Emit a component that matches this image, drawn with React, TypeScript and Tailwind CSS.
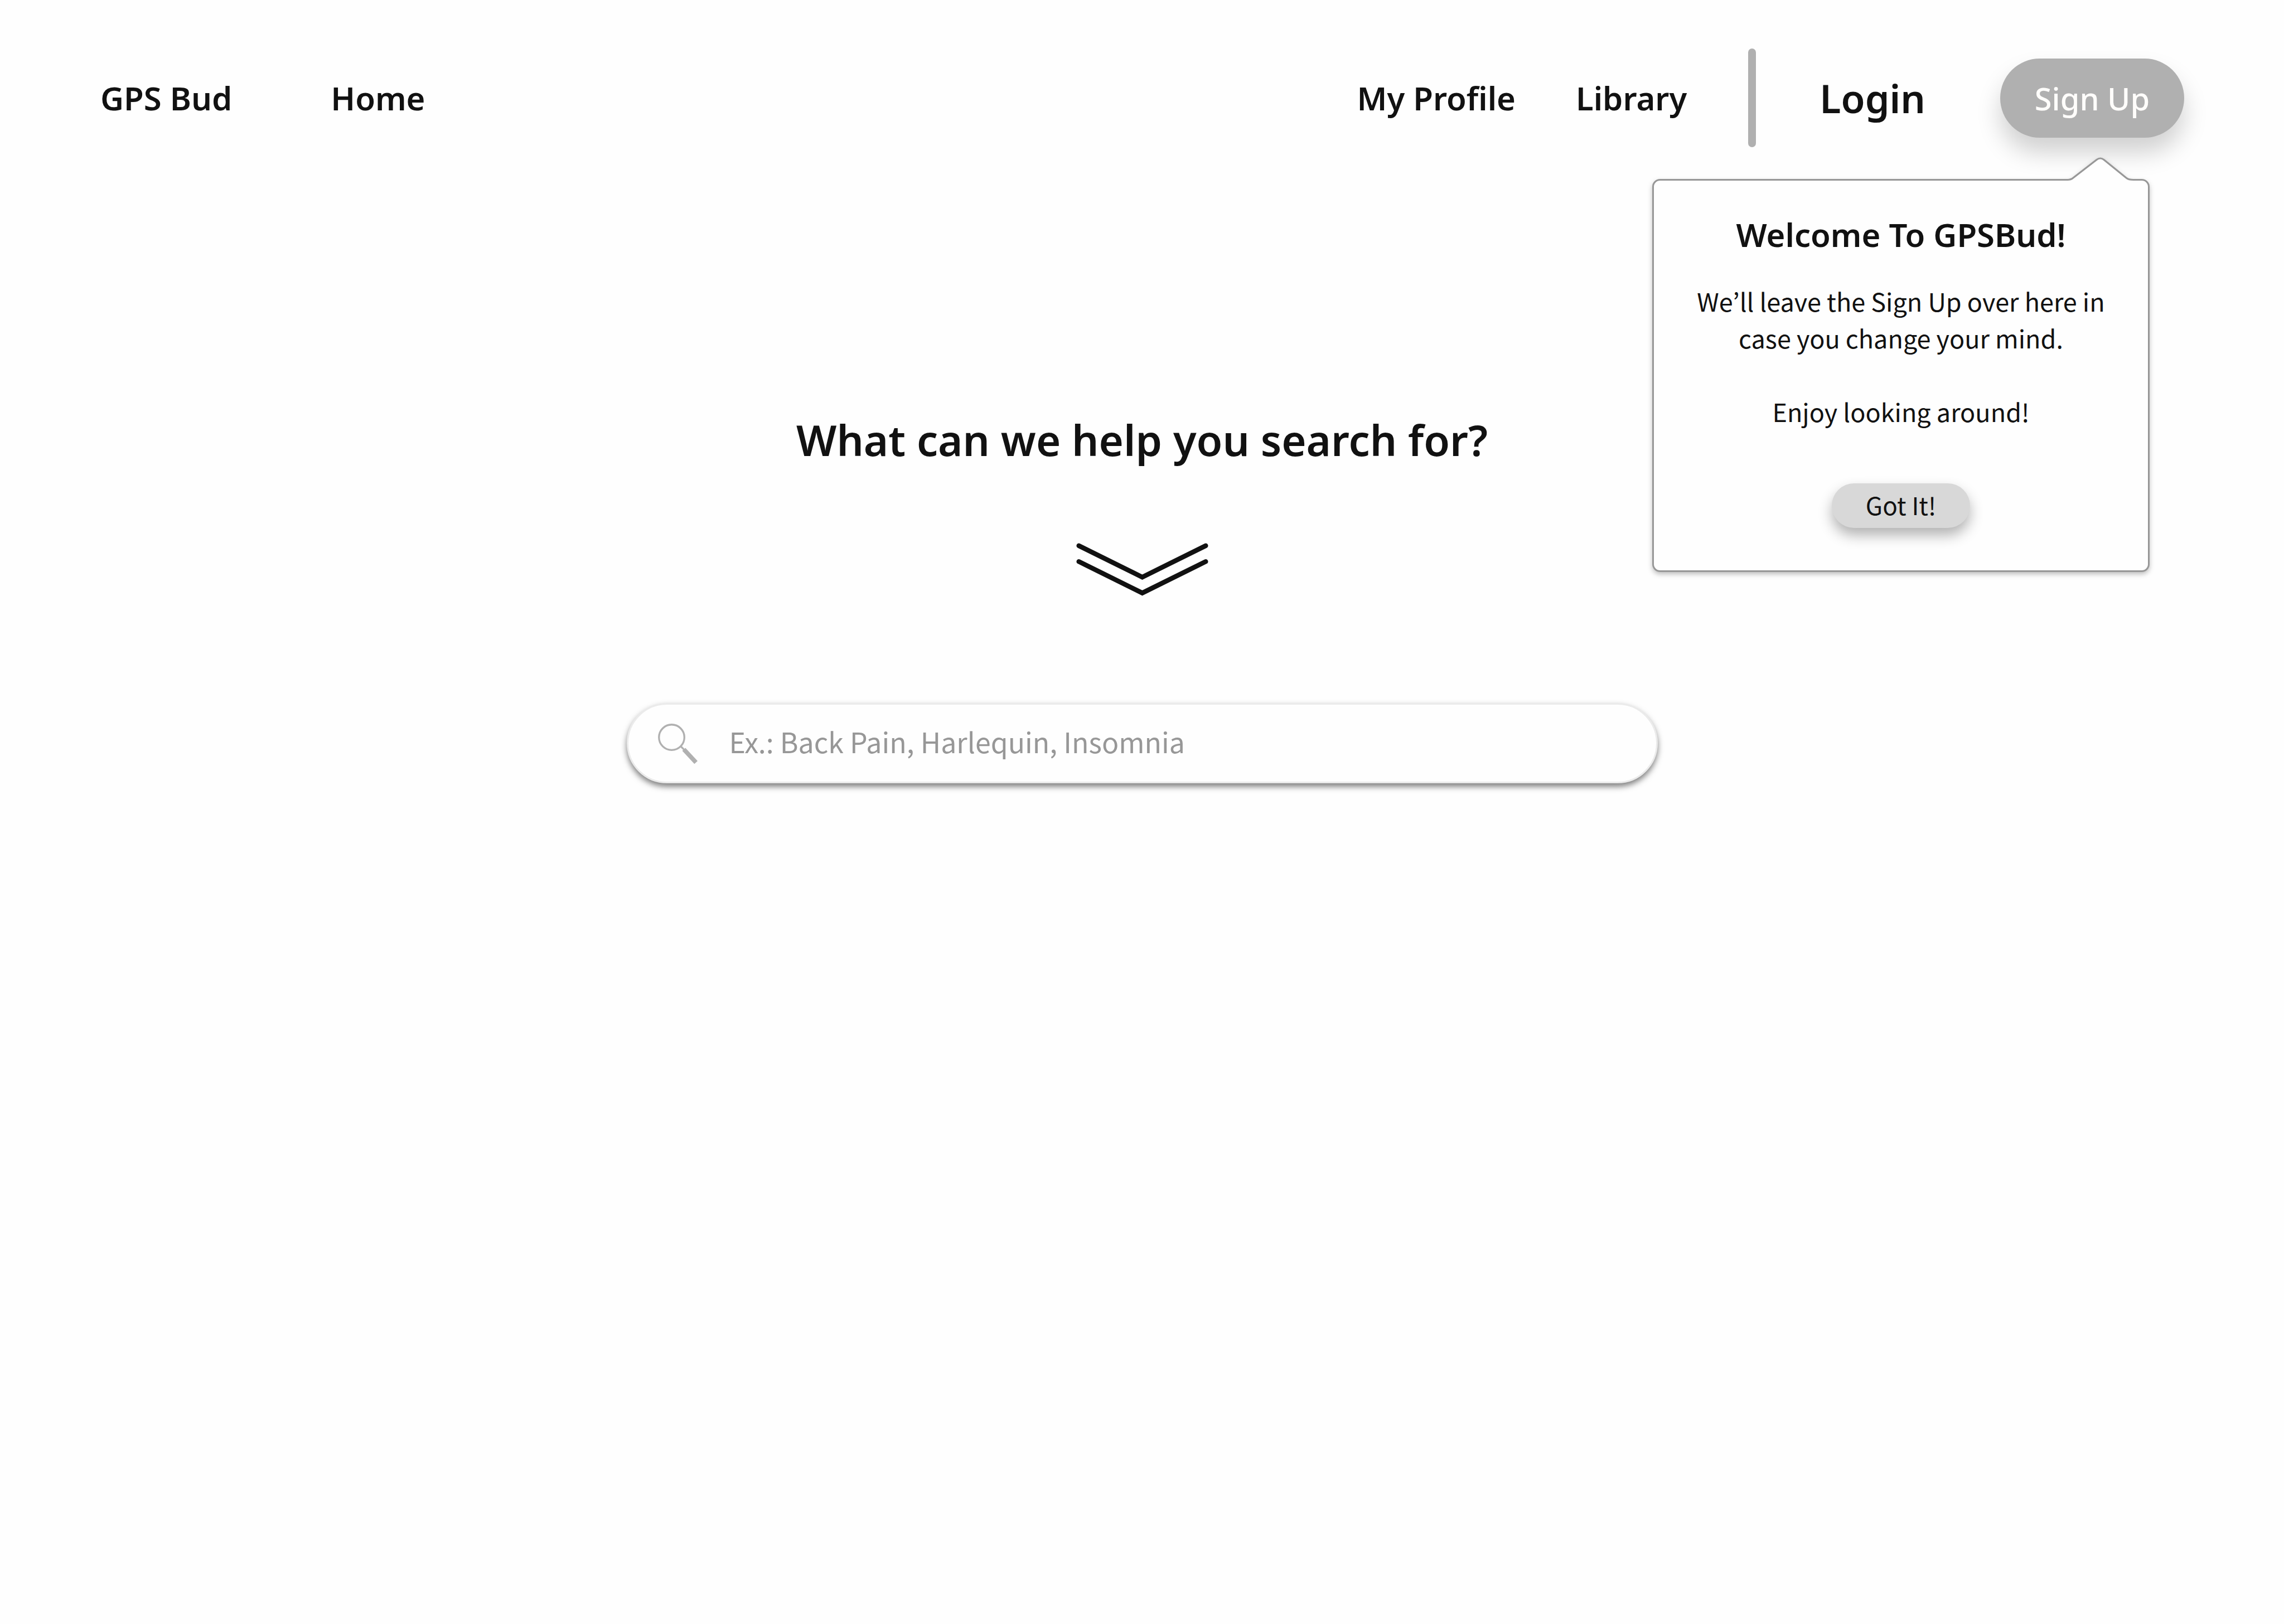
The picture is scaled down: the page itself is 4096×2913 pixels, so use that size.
const heading = "font-['Noto_Sans',sans-serif] text-[#111111]";
const body = "font-['Noto_Sans_CJK_KR',sans-serif] text-[#111111]";

function NavLink({ label }: { label: string }) {
  return (
    <a href="#" className={`${heading} text-[58px] leading-[80px] font-semibold whitespace-nowrap`}>
      {label}
    </a>
  );
}

function WelcomePopover() {
  return (
    <section
      role="dialog"
      aria-labelledby="welcome-title"
      className="absolute top-[216px] right-[62px] flex w-[892px] flex-col items-center rounded-[14px] border-[3px] border-[#979797] bg-[#fefefe] pt-[57px] pb-[76px] text-center drop-shadow-[0_4px_4px_rgba(0,0,0,0.25)]"
    >
      <svg
        aria-hidden="true"
        viewBox="0 0 120 44"
        className="absolute -top-[42px] right-[25px] h-[44px] w-[120px]"
      >
        <path
          d="M1 44V40.500C6 40.500 8 39.500 11 36.500L52 4.500Q59.500 -1 67 4.500L107 36.500C110 39.500 113 40.500 119 40.500V44Z"
          fill="#fefefe"
        />
        <path
          d="M1 40.500C6 40.500 8 39.500 11 37L53 4.500Q59.500 -0.500 66 4.500L106 37C109 39.500 112 40.500 119 40.500"
          fill="none"
          stroke="#979797"
          strokeWidth="3"
        />
      </svg>
      <h2 id="welcome-title" className={`${heading} text-[58px] leading-[80px] font-semibold`}>
        Welcome To GPSBud!
      </h2>
      <div className={`${body} mt-[46px] text-[45px] leading-[66px]`}>
        <p>
          We’ll leave the Sign Up over here in
          <br />
          case you change your mind.
        </p>
        <p className="mt-[66px]">Enjoy looking around!</p>
      </div>
      <button
        type="button"
        className={`${body} mt-24 h-20 w-[248px] rounded-full bg-[#d8d8d8] pb-1 text-[44px] leading-none shadow-[0_13px_25px_rgba(0,0,0,0.3)]`}
      >
        Got It!
      </button>
    </section>
  );
}

function SearchIcon() {
  return (
    <svg aria-hidden="true" viewBox="0 0 100 100" className="size-[95px] shrink-0" fill="none" stroke="#b0b0b0">
      <circle cx="35.300" cy="38.500" r="24" strokeWidth="3.500" />
      <path d="M52 55L59 62" strokeWidth="3.500" />
      <path d="M58.300 61.200L81.200 86" strokeWidth="8.200" />
    </svg>
  );
}

export default function App() {
  return (
    <div className="min-h-screen bg-[#fefefe]">
      <header className="flex items-center justify-between pt-[87px] pr-[179px] pl-[180px]">
        <nav aria-label="Main" className="flex items-center gap-[177px]">
          <NavLink label="GPS Bud" />
          <NavLink label="Home" />
        </nav>
        <div className="flex items-center">
          <nav aria-label="Account" className="flex items-center gap-[108px]">
            <NavLink label="My Profile" />
            <NavLink label="Library" />
          </nav>
          <div className="mr-[114px] ml-[110px] h-[177px] w-[14px] rounded-full bg-[#b0b0b0]" />
          <a href="#" className={`${heading} mr-[134px] text-[70px] leading-[96px] font-semibold`}>
            Login
          </a>
          <div className="relative">
            <button
              type="button"
              className="h-[142px] w-[330px] rounded-full bg-[#b0b0b0] font-['Noto_Sans',sans-serif] text-[56px] leading-[80px] font-medium text-[#fffdfb] shadow-[0_27px_43px_rgba(0,0,0,0.18)]"
            >
              Sign Up
            </button>
            <WelcomePopover />
          </div>
        </div>
      </header>

      <main className="flex flex-col items-center pt-[473px]">
        <h1 className={`${heading} text-[76px] leading-[104px] font-semibold`}>
          What can we help you search for?
        </h1>
        <svg
          aria-hidden="true"
          viewBox="0 0 250 100"
          className="mt-[133px] h-[95px] w-[237px]"
          fill="none"
          stroke="#111111"
          strokeWidth="9"
          strokeLinecap="round"
        >
          <path d="M5 5L125 64.500L245 5" />
          <path d="M5 35L125 94.500L245 35" />
        </svg>
        <form
          role="search"
          className="mt-48 flex h-[144px] w-[1849px] max-w-full items-center gap-[42px] rounded-full border-[3px] border-[#ebebeb] bg-[#fefefe] pr-16 pl-[44px] shadow-[0_6px_11px_rgba(0,0,0,0.5)]"
        >
          <SearchIcon />
          <input
            type="text"
            aria-label="Search"
            placeholder="Ex.: Back Pain, Harlequin, Insomnia"
            className={`${body} h-full min-w-0 flex-1 bg-transparent pb-2 text-[50px] outline-none placeholder:text-[#979797]`}
          />
        </form>
      </main>
    </div>
  );
}
